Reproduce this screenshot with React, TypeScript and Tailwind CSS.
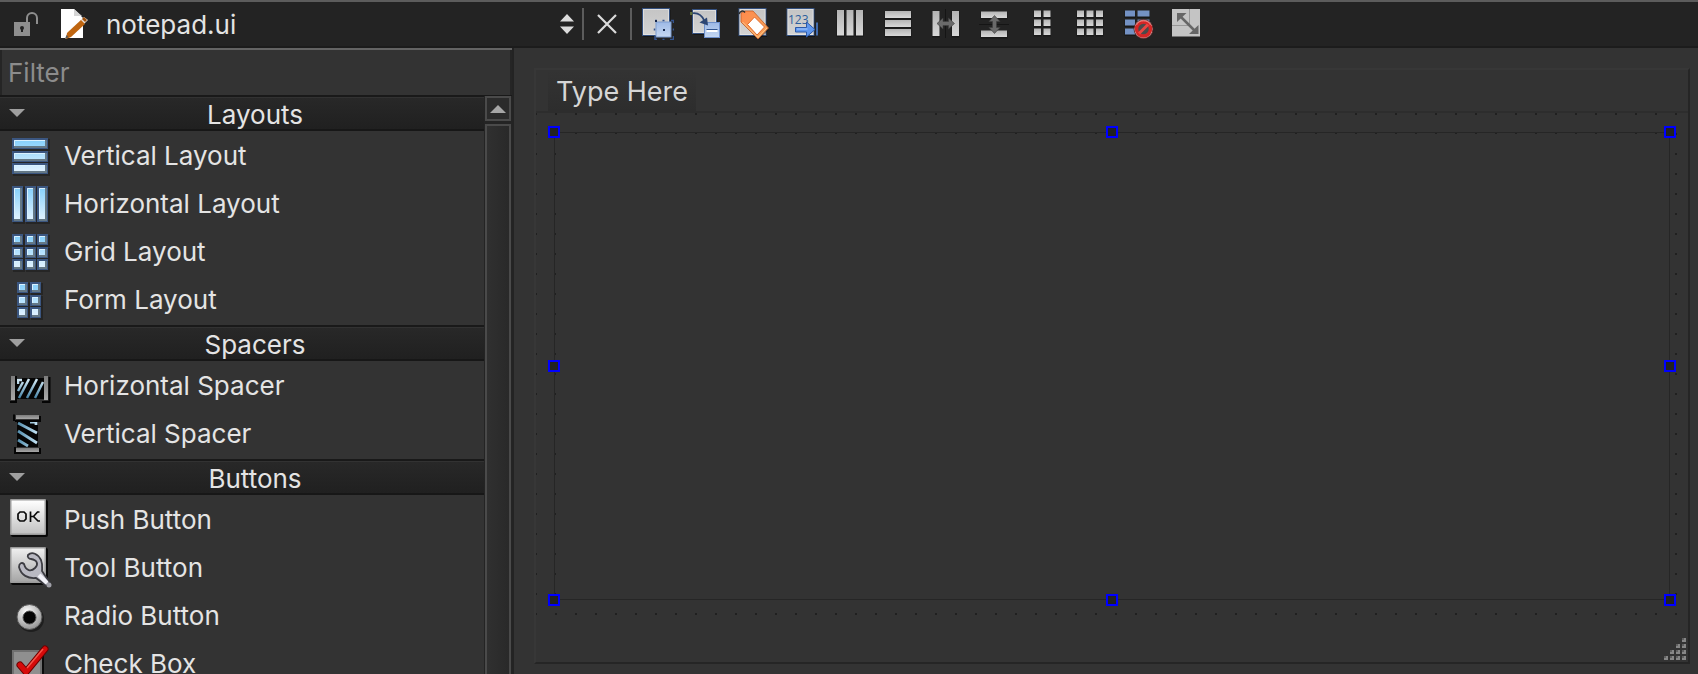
import { useState } from "react";
import type { ReactNode } from "react";

const C3 = [0, 1, 2];

/* ---------- toolbar icons, 32 x 32 ---------- */

function Defs() {
  return (
    <svg className="absolute size-0" aria-hidden="true">
      <defs>
        <linearGradient id="silver" x1="0" y1="0" x2="0" y2="1">
          <stop offset="0" stopColor="#b4b4b4" />
          <stop offset="1" stopColor="#d8d8d8" />
        </linearGradient>
        <linearGradient id="paper" x1="0" y1="0" x2="0" y2="1">
          <stop offset="0" stopColor="#c4c4c4" />
          <stop offset="1" stopColor="#d4d4d4" />
        </linearGradient>
        <linearGradient id="glass" x1="0" y1="0" x2="0" y2="1">
          <stop offset="0" stopColor="#9db9e6" />
          <stop offset="1" stopColor="#c6d8f2" />
        </linearGradient>
        <linearGradient id="sky" gradientUnits="userSpaceOnUse" x1="0" y1="4" x2="0" y2="38">
          <stop offset="0" stopColor="#83cffb" />
          <stop offset="1" stopColor="#e4f3ff" />
        </linearGradient>
        <linearGradient id="orange" x1="0" y1="0" x2="1" y2="1">
          <stop offset="0" stopColor="#ff8a4c" />
          <stop offset="1" stopColor="#f5a55a" />
        </linearGradient>
        <linearGradient id="metal" x1="0" y1="0" x2="0" y2="1">
          <stop offset="0" stopColor="#7c7c7c" />
          <stop offset="1" stopColor="#a8a8a8" />
        </linearGradient>
        <linearGradient id="cap" x1="0" y1="0" x2="0" y2="1">
          <stop offset="0" stopColor="#ffffff" />
          <stop offset="1" stopColor="#c2c2c2" />
        </linearGradient>
        <linearGradient id="capGrey" x1="0" y1="0" x2="0" y2="1">
          <stop offset="0" stopColor="#efefef" />
          <stop offset="1" stopColor="#a6a6a6" />
        </linearGradient>
        <linearGradient id="coil" gradientUnits="userSpaceOnUse" x1="0" y1="12" x2="0" y2="34">
          <stop offset="0" stopColor="#e6f6ff" />
          <stop offset="1" stopColor="#3f7fa3" />
        </linearGradient>
        <linearGradient id="coilV" gradientUnits="userSpaceOnUse" x1="8" y1="0" x2="31" y2="0">
          <stop offset="0" stopColor="#4a87a8" />
          <stop offset="1" stopColor="#cdeafa" />
        </linearGradient>
        <radialGradient id="dial" cx="0.4" cy="0.3" r="0.8">
          <stop offset="0" stopColor="#ffffff" />
          <stop offset="1" stopColor="#868686" />
        </radialGradient>
      </defs>
    </svg>
  );
}

function Tool({ label, children }: { label: string; children: ReactNode }) {
  return (
    <button type="button" aria-label={label} title={label} className="shrink-0">
      <svg width="32" height="32" viewBox="0 0 32 32" aria-hidden="true">
        {children}
      </svg>
    </button>
  );
}

function Plate({ x, y, w, h, fill = "url(#silver)" }: { x: number; y: number; w: number; h: number; fill?: string }) {
  return (
    <g>
      <rect x={x - 0.5} y={y + 0.5} width={w + 1} height={h + 1} fill="#111" opacity="0.6" />
      <rect x={x} y={y} width={w} height={h} fill={fill} />
    </g>
  );
}

function Sheet({ x = 0.5, y = 0.5, size = 27 }: { x?: number; y?: number; size?: number }) {
  return (
    <g>
      <rect x={x + 1} y={y + 1.5} width={size} height={size} fill="#0c0c0c" opacity="0.6" />
      <rect x={x} y={y} width={size} height={size} fill="url(#paper)" stroke="#34507e" />
      <rect x={x + 1} y={y + 1} width={size - 2} height={size - 2} fill="none" stroke="#ececec" opacity="0.6" />
    </g>
  );
}

function Toolbar() {
  return (
    <div className="flex items-center gap-4 pl-2.5">
      <Tool label="Edit Widgets">
        <Sheet />
        <rect x="14" y="14" width="15" height="15" fill="url(#glass)" stroke="#7d9cd0" />
        <path d="M13 12.500h2M20.500 12.500h2M29 12.500h2.500V15M31.500 20.500v2M31.500 28v3.500H28M22.500 31.500h-2M15 31.500h-2V28M12.500 22.500v-2" fill="none" stroke="#34548f" strokeWidth="1.500" />
        <rect x="13" y="12" width="2" height="2" fill="#16284d" />
        <rect x="21" y="21" width="2" height="2" fill="#16284d" />
      </Tool>
      <Tool label="Edit Signals/Slots">
        <Sheet x={2.5} y={1.500} size={24} />
        <rect x="14.500" y="14.500" width="15" height="15" fill="url(#glass)" stroke="#6d8fca" />
        <rect x="16.500" y="22" width="11" height="2" fill="#fff" />
        <rect x="16.500" y="21" width="11" height="1" fill="#31548f" />
        <path d="M0.500 5.500C7 4 12 7 14.500 13" fill="none" stroke="#2d4673" strokeWidth="1.800" />
        <path d="M18 17.500 9.500 14.500l7.500-5z" fill="#2d4673" />
        <rect x="0" y="4" width="2.500" height="3" fill="#5d6d3a" />
      </Tool>
      <Tool label="Edit Buddies">
        <Sheet x={1} />
        <path d="M5 5.500h9L31 22 21 32 3 14z" fill="#111" opacity="0.450" />
        <path d="M3 5 7 3h8L30.500 20 20 31 3 14z" fill="url(#orange)" stroke="#c4602a" strokeWidth="0.800" />
        <path d="m4.500 14 15.500 15.500L29 20" fill="none" stroke="#ffc98a" />
        <path d="m16.500 9 10 10-7.500 8-9.500-10.500z" fill="#fff" stroke="#e06a2c" />
        <path d="M1 6c1-3 4-4 6-1.500" fill="none" stroke="#2e2e2e" strokeWidth="1.500" />
      </Tool>
      <Tool label="Edit Tab Order">
        <Sheet x={1} />
        <text x="2" y="16" fontSize="12" fill="#2d5f9c" className="font-['Open_Sans',sans-serif]">
          123
        </text>
        <path d="M9.500 19.500h11V14l8.500 7.500-8.500 7.500v-5h-11z" fill="#5f97ee" stroke="#2d59a8" />
        <path d="M11 21h10.500" stroke="#a9cbff" />
        <path d="M31 14.500v13" stroke="#4f86dd" strokeWidth="1.500" />
      </Tool>
      <Tool label="Lay Out Horizontally">
        {C3.map((i) => (
          <Plate key={i} x={3 + i * 9.500} y={2} w={7} h={25.500} />
        ))}
      </Tool>
      <Tool label="Lay Out Vertically">
        {C3.map((i) => (
          <Plate key={i} x={3} y={3 + i * 9} w={26} h={7} />
        ))}
      </Tool>
      <Tool label="Lay Out Horizontally in Splitter">
        <path d="M15.500 1v29" stroke="#151515" />
        <Plate x={2.500} y={3} w={7} h={25} />
        <Plate x={22} y={3} w={7} h={25} />
        <path d="m7 15.500 6-5.500v3.500h5.500V10l6 5.500-6 5.500v-3.500H13V21z" fill="#6a6a6a" stroke="#3e3e3e" strokeWidth="0.600" />
      </Tool>
      <Tool label="Lay Out Vertically in Splitter">
        <path d="M1 16.500h30" stroke="#151515" />
        <Plate x={3} y={3.500} w={26} h={6.500} />
        <Plate x={3} y={22.500} w={26} h={6.500} />
        <path d="m16.500 7.500 5.500 6H18.500v6H22l-5.500 6-5.500-6h3.500v-6H11z" fill="#6a6a6a" stroke="#3e3e3e" strokeWidth="0.600" />
      </Tool>
      <Tool label="Lay Out in a Form Layout">
        {C3.map((r) => [8, 17.500].map((x) => <Plate key={`${r}-${x}`} x={x} y={2.500 + r * 9} w={7} h={6.500} />))}
      </Tool>
      <Tool label="Lay Out in a Grid">
        {C3.map((r) => C3.map((c) => <Plate key={`${r}-${c}`} x={3 + c * 9.500} y={2.500 + r * 9} w={7} h={6.500} />))}
      </Tool>
      <Tool label="Break Layout">
        {C3.map((r) => (
          <g key={r}>
            <Plate x={3} y={2.500 + r * 9} w={10} h={6} fill="#7492c4" />
            <Plate x={15.500} y={2.500 + r * 9} w={12} h={6} fill="#7492c4" />
          </g>
        ))}
        <circle cx="21.500" cy="21" r="9.500" fill="#cfcfcf" stroke="#5b1414" strokeWidth="0.800" />
        <circle cx="21.500" cy="21" r="7" fill="#4a4a4a" stroke="#d42626" strokeWidth="3.500" />
        <path d="m17 25.500 9-9" stroke="#ea4642" strokeWidth="3" />
        <path d="M14.500 17a8 8 0 0 1 14 0" fill="none" stroke="#ff9a94" opacity="0.700" />
      </Tool>
      <Tool label="Adjust Size">
        <rect x="2" y="1" width="28" height="27.500" fill="#c4c4c4" />
        <path d="M19.500 1v16.500H2" fill="none" stroke="#989898" />
        <path d="m10 8 15 15" stroke="#666" strokeWidth="2.500" />
        <path d="M7 5h9.500L7 14zM28.500 26h-9.500l9.500-9z" fill="#666" />
      </Tool>
    </div>
  );
}

/* ---------- widget box icons, 44 x 44 ---------- */

function Tile({ x, y, w, h }: { x: number; y: number; w: number; h: number }) {
  return (
    <g>
      <rect x={x + 1} y={y + 1} width={w + 1} height={h + 1} fill="#1c1c1c" opacity="0.600" />
      <rect x={x} y={y} width={w} height={h} fill="#3b5680" />
      <rect x={x + 2} y={y + 2} width={w - 3} height={h - 3} fill="#647886" />
      <rect x={x + 2} y={y + 2} width={w - 5} height={h - 5} fill="url(#sky)" />
      <path d={`M${x + 2.500} ${y + h - 3}V${y + 2.500}H${x + w - 3}`} fill="none" stroke="#d9f1ff" />
    </g>
  );
}

const STEP = [3, 16, 28];

const icons: Record<string, ReactNode> = {
  "Vertical Layout": STEP.map((y) => <Tile key={y} x={4} y={y} w={36} h={11} />),
  "Horizontal Layout": STEP.map((x) => <Tile key={x} x={x + 1} y={3} w={11} h={36} />),
  "Grid Layout": STEP.map((y) => STEP.map((x) => <Tile key={`${x}-${y}`} x={x + 1} y={y} w={11} h={11} />)),
  "Form Layout": STEP.map((y) => [9, 22].map((x) => <Tile key={`${x}-${y}`} x={x} y={y} w={11} h={11} />)),
  "Horizontal Spacer": (
    <g>
      <rect x="8" y="13" width="28" height="21" fill="#050505" />
      <path d="M10 19v-4h4M11 33 21 14M19 33 29 14M27 33l8-16M10 26l5-9" fill="none" stroke="url(#coil)" strokeWidth="2.500" />
      <path d="M2 37h6V11M34 37h7.500V12" fill="none" stroke="#050505" strokeWidth="2" />
      <rect x="3" y="11" width="4" height="24" fill="url(#metal)" />
      <rect x="36" y="11" width="4" height="24" fill="url(#metal)" />
    </g>
  ),
  "Vertical Spacer": (
    <g>
      <rect x="9" y="7" width="21" height="27" fill="#050505" />
      <path d="M10 10l19 10M10 18l19 12M10 27l10 6M22 9h6v3" fill="none" stroke="url(#coilV)" strokeWidth="2.800" />
      <path d="M6 8V1.500M7 8h25V3M7 34v6h25v-5" fill="none" stroke="#050505" strokeWidth="2" />
      <rect x="8" y="2" width="23" height="4" fill="url(#metal)" />
      <rect x="8" y="35" width="23" height="4" fill="url(#metal)" />
    </g>
  ),
  "Push Button": (
    <g>
      <rect x="3" y="1" width="37" height="37" rx="2" fill="#090909" />
      <rect x="2" y="0" width="36" height="36" rx="1" fill="#9b9b9b" />
      <rect x="3.500" y="1.500" width="33" height="33" fill="url(#cap)" />
      <path d="M12 13h4l2 2v5l-2 2h-4l-2-2v-5zM22.500 12.500V23M31.500 13h-2l-4 4.500h-3M25.500 17.500l4.500 4.500h2" fill="none" stroke="#080808" strokeWidth="1.700" />
    </g>
  ),
  "Tool Button": (
    <g>
      <rect x="3" y="1" width="37" height="37" rx="2" fill="#090909" />
      <rect x="2" y="0" width="36" height="36" rx="1" fill="#9b9b9b" />
      <rect x="3.500" y="1.500" width="33" height="33" fill="url(#capGrey)" />
      <path
        d="M20 8c4-4 10-1 13 5 2 5 1 8 1 11l8 12c1 4-3 4-6 1l-8-6c-8 1-15-3-17-11 0-4 3-5 5-3 2 7 7 8 11 4s2-8-4-9c-2 0-4-2-3-4z"
        fill="#b9b9c2"
        stroke="#3c3c42"
        strokeWidth="1.800"
      />
      <path d="m31 28 8 8" stroke="#f1f1f7" strokeWidth="4" />
      <circle cx="41" cy="38" r="2.500" fill="#a0a0a8" />
    </g>
  ),
  "Radio Button": (
    <g>
      <circle cx="23" cy="24" r="13" fill="#161616" opacity="0.700" />
      <circle cx="21.500" cy="22" r="12.500" fill="url(#dial)" stroke="#555" />
      <circle cx="21.500" cy="22.500" r="6.500" fill="#050505" stroke="#555" />
    </g>
  ),
  "Check Box": (
    <g>
      <rect x="5" y="8" width="31" height="31" fill="#0b0b0b" />
      <rect x="4" y="7" width="30" height="30" fill="#707070" />
      <rect x="6" y="9" width="26" height="26" fill="#8f8f8f" />
      <path d="m12 22 6 7L37 6" fill="none" stroke="#6d0000" strokeWidth="7" strokeLinecap="round" />
      <path d="m12 22 6 7L37 6" fill="none" stroke="#d60a0a" strokeWidth="5" strokeLinecap="round" />
      <path d="m19 25 16-19" stroke="#f4564a" strokeWidth="1.500" />
    </g>
  ),
};

const sections = [
  { title: "Layouts", items: ["Vertical Layout", "Horizontal Layout", "Grid Layout", "Form Layout"] },
  { title: "Spacers", items: ["Horizontal Spacer", "Vertical Spacer"] },
  { title: "Buttons", items: ["Push Button", "Tool Button", "Radio Button", "Check Box"] },
];

function Section({ title, items }: { title: string; items: string[] }) {
  const [open, setOpen] = useState(true);
  return (
    <section>
      <h2>
        <button
          type="button"
          aria-expanded={open}
          onClick={() => setOpen(!open)}
          className="relative flex h-[38px] w-full items-start border-t-2 border-[#191919]"
        >
          <span className="flex h-[34px] w-full items-center justify-center border-t border-b-2 border-t-[#323232] border-b-[#171717] bg-linear-to-b from-[#282828] to-[#202020] pt-0.5 pl-[26px]">
            {title}
          </span>
          <svg width="16" height="8" viewBox="0 0 16 8" className="absolute top-3 left-[9px]" aria-hidden="true">
            <path d="M0 0h16L8 8z" fill="#9f9f9f" />
          </svg>
        </button>
      </h2>
      {open && (
        <ul>
          {items.map((item) => (
            <li key={item}>
              <button type="button" className="flex h-12 w-full items-center gap-3 pl-2 text-left">
                <svg width="44" height="44" viewBox="0 0 44 44" className="shrink-0" aria-hidden="true">
                  {icons[item]}
                </svg>
                <span className="pb-1">{item}</span>
              </button>
            </li>
          ))}
        </ul>
      )}
    </section>
  );
}

function WidgetBox() {
  return (
    <aside className="flex w-[514px] shrink-0 flex-col border-r-2 border-[#232323]">
      <div className="flex shrink-0 border-t-2 border-[#646464]">
        <input
          type="text"
          aria-label="Filter"
          placeholder="Filter"
          className="h-[45px] w-full border-x-2 border-[#252525] bg-[#333333] px-1.5 text-[26px] outline-none placeholder:text-[#8c8c8c]"
        />
      </div>
      <div className="flex min-h-0 flex-1">
        <div className="min-w-0 flex-1 overflow-hidden text-[26px] text-[#e4e4e4]">
          {sections.map((s) => (
            <Section key={s.title} {...s} />
          ))}
        </div>
        <div className="flex w-7 flex-col gap-[3px] border-t border-[#191919] bg-[#242424] px-px">
          <button
            type="button"
            aria-label="Scroll up"
            className="flex h-[25px] shrink-0 items-center justify-center border-2 border-[#4a4a4a] bg-[#2b2b2b]"
          >
            <svg width="16" height="8" viewBox="0 0 16 8" aria-hidden="true">
              <path d="M0 8h16L8 0z" fill="#a6a6a6" />
            </svg>
          </button>
          <div className="flex-1 border-x-2 border-t-2 border-[#4a4a4a] bg-linear-to-r from-[#303030] to-[#292929]" />
        </div>
      </div>
    </aside>
  );
}

const HANDLES = [
  "left-0 top-0",
  "left-1/2 top-0",
  "left-full top-0",
  "left-0 top-1/2",
  "left-full top-1/2",
  "left-0 top-full",
  "left-1/2 top-full",
  "left-full top-full",
];

function FormEditor() {
  return (
    <main className="flex min-w-0 flex-1 pt-5 pr-2 pb-2.5 pl-5">
      <div className="flex min-w-0 flex-1 flex-col border-2 border-t-[#373737] border-r-[#252525] border-b-[#252525] border-l-[#373737]">
        <div className="flex h-[43px] shrink-0 border-b-2 border-[#2d2d2d] pl-3">
          <button
            type="button"
            className="h-[41px] bg-linear-to-b from-[#333333] to-[#2d2d2d] px-2 pt-0.5 text-[27px] text-[#d6d6d6]"
          >
            Type Here
          </button>
        </div>
        <div className="relative flex flex-1 pt-[19px] pr-[18px] pb-[62px] pl-[18px]">
          <svg className="absolute inset-x-0 top-0 h-[calc(100%-46px)] w-full" aria-hidden="true">
            <defs>
              <pattern id="grid" width="20" height="20" patternUnits="userSpaceOnUse">
                <rect x="0" y="0" width="1" height="2" fill="#202020" />
                <rect x="19" y="0" width="1" height="2" fill="#202020" />
              </pattern>
            </defs>
            <rect width="100%" height="100%" fill="url(#grid)" />
          </svg>
          <div className="relative flex flex-1 pt-0.5 pl-0.5">
            <div className="flex-1 bg-[#333333]" />
            <div className="absolute inset-0 border border-[#262626]" />
            {HANDLES.map((pos) => (
              <span
                key={pos}
                className={`absolute size-3 -translate-x-1/2 -translate-y-1/2 border-2 border-[#0000ff] bg-[#222222] ${pos}`}
              />
            ))}
          </div>
          <svg width="22" height="22" viewBox="0 0 22 22" className="absolute right-0.5 bottom-0.5" aria-hidden="true">
            {[0, 1, 2, 3].map((r) =>
              [0, 1, 2, 3]
                .filter((c) => c + r >= 3)
                .map((c) => (
                  <g key={`${r}-${c}`}>
                    <rect x={c * 6} y={r * 6} width="4" height="4" fill="#868686" />
                    <rect x={c * 6} y={r * 6} width="2" height="2" fill="#606060" />
                  </g>
                )),
            )}
          </svg>
        </div>
      </div>
    </main>
  );
}

export default function App() {
  return (
    <div className="flex h-screen flex-col overflow-hidden bg-[#333333] font-[Inter,sans-serif] text-[#e4e4e4]">
      <Defs />
      <header className="flex h-12 shrink-0 items-center border-t-2 border-b-2 border-t-[#5c5c5c] border-b-[#1c1c1c] bg-[#232323]">
        <div className="flex w-[582px] shrink-0 items-center gap-[22px] pr-2 pl-3.5">
          <svg width="25" height="25" viewBox="0 0 25 25" className="shrink-0" aria-hidden="true">
            <rect x="0" y="10" width="16" height="14" fill="#8e8e8e" />
            <path d="M13 10V6a5 5 0 0 1 10 0v6" fill="none" stroke="#8e8e8e" strokeWidth="2" />
            <circle cx="8" cy="16" r="2" fill="#222" />
            <path d="M7 16h2v4H7z" fill="#222" />
          </svg>
          <svg width="28" height="32" viewBox="0 0 28 32" className="shrink-0" aria-hidden="true">
            <path d="M0 1h13l9 9v20H0z" fill="#fff" />
            <path d="M13 1v7h8z" fill="#d5d5d5" />
            <path d="m4 31 3-7L23 9l4 3L11 28z" fill="#e8e0d6" />
            <path d="m5 31 1-6L20 12l4 4L10 29z" fill="#bf6510" />
            <path d="m21 11 2-2 3 3-2 2z" fill="#9c4f0c" />
            <path d="m4 31 1.500-4 2 2z" fill="#555" />
          </svg>
          <select
            aria-label="Open file"
            className="-ml-[5px] min-w-0 flex-1 appearance-none bg-transparent pt-0.5 text-[26px] leading-9 text-[#e4e4e4] outline-none"
          >
            <option>notepad.ui</option>
          </select>
          <svg width="14" height="20" viewBox="0 0 14 20" className="shrink-0" aria-hidden="true">
            <path d="M0 7.500h14L7 0zM0 12.500h14L7 20z" fill="#dcdcdc" />
          </svg>
        </div>
        <div className="h-8 w-0.5 shrink-0 bg-[#5c5c5c]" />
        <button type="button" aria-label="Close" className="flex w-[46px] shrink-0 justify-center">
          <svg width="20" height="20" viewBox="0 0 20 20" aria-hidden="true">
            <path d="m1 1 18 18M19 1 1 19" stroke="#dcdcdc" strokeWidth="2.200" />
          </svg>
        </button>
        <div className="h-8 w-0.5 shrink-0 bg-[#5c5c5c]" />
        <Toolbar />
      </header>
      <div className="flex min-h-0 flex-1">
        <WidgetBox />
        <FormEditor />
      </div>
    </div>
  );
}
